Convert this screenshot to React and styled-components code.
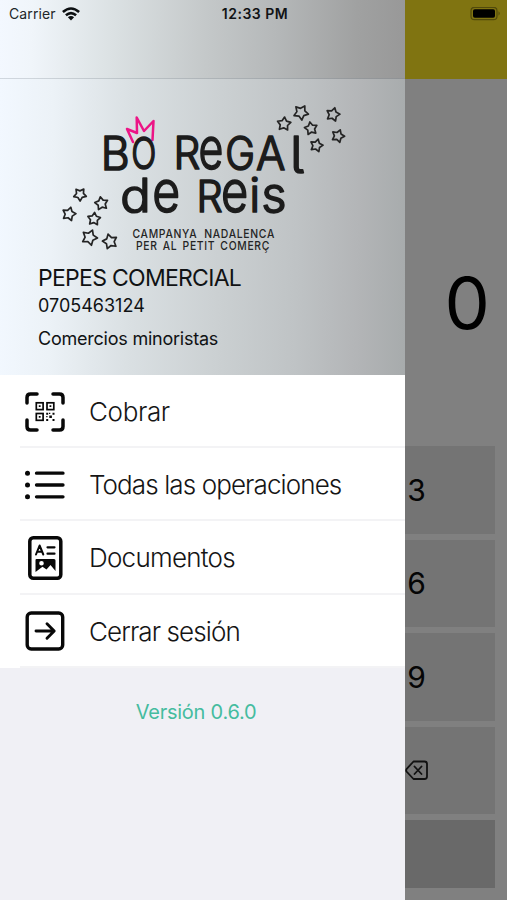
import React from "react";
import styled, { createGlobalStyle } from "styled-components";

const GlobalStyle = createGlobalStyle`
  * { box-sizing: border-box; }
  body { margin: 0; background: #808080; font-family: Inter, "Liberation Sans", sans-serif; }
`;

const Screen = styled.div`
  position: relative;
  width: 507px;
  height: 900px;
  overflow: hidden;
  background: #808080;
  color: #101214;
`;

const Register = styled.main`
  display: flex;
  flex-direction: column;
  height: 100%;
`;

const RegisterHeader = styled.header`
  height: 79px;
  flex: none;
  background: #807411;
`;

const Amount = styled.div`
  height: 367px;
  flex: none;
  display: flex;
  align-items: center;
  justify-content: flex-end;
  padding: 80px 17px 0 0;
  color: #000;
  font-family: Inter, sans-serif;
  font-size: 72px;
  line-height: 1;
`;

const Digit = styled.span`
  display: block;
`;

const Keypad = styled.div`
  display: grid;
  grid-template-columns: 156px;
  grid-auto-rows: 87.5px;
  justify-content: end;
  gap: 6px;
  padding-right: 12.5px;
`;

const Key = styled.div`
  display: flex;
  align-items: center;
  justify-content: center;
  background: ${(p) => (p.$wide ? "#696969" : "#747474")};
  height: ${(p) => (p.$wide ? "68px" : "auto")};
  color: #050505;
  font-size: 30px;
`;

const Drawer = styled.aside`
  position: absolute;
  top: 0;
  left: 0;
  width: 405px;
  height: 900px;
  display: flex;
  flex-direction: column;
  background: #f0f0f5;
`;

const DrawerBar = styled.div`
  height: 79px;
  flex: none;
  border-bottom: 1px solid rgba(120, 130, 140, 0.28);
  background: linear-gradient(91deg, #f3f8ff 0%, #f0f5fa 8%, #dce2e4 27%, #c4c8c9 51%, #b5b8b9 68%, #a0a1a1 88%, #989898 100%);
`;

const Profile = styled.section`
  height: 296px;
  flex: none;
  display: flex;
  flex-direction: column;
  padding: 21px 38px 0;
  background: linear-gradient(91deg, #f2f8ff 0%, #ecf2f7 13%, #dae0e3 32%, #cbd0d2 54%, #bfc3c5 73%, #b3b5b7 88%, #a7abac 100%);
`;

const Logo = styled.svg`
  display: block;
  width: 300px;
  height: 161px;
  flex: none;
  margin-left: 12px;
`;

const Line = styled.div`
  height: ${(p) => p.$h}px;
  line-height: ${(p) => p.$h}px;
  font-size: ${(p) => p.$size}px;
  letter-spacing: ${(p) => p.$track || 0}px;
  white-space: nowrap;
`;

const Menu = styled.nav`
  display: flex;
  flex-direction: column;
  height: 293px;
  flex: none;
  padding-left: 20px;
  background: #fff;
`;

const MenuItem = styled.div`
  height: 73.2px;
  display: flex;
  align-items: center;
  gap: 24px;
  padding: 2px 0 0 5px;
  border-bottom: 2px solid #f3f3f5;
`;

const Icon = styled.svg`
  display: block;
  width: 40px;
  height: 46px;
  flex: none;
  fill: none;
  stroke: #080808;
  stroke-linecap: round;
  stroke-linejoin: round;
`;

const Label = styled.span`
  font-size: 26px;
  font-weight: 300;
  letter-spacing: ${(p) => p.$track}px;
  white-space: nowrap;
  color: #151515;
`;

const Version = styled.div`
  margin-top: 31px;
  width: 392px;
  text-align: center;
  font-size: 20px;
  line-height: 26px;
  letter-spacing: -0.25px;
  color: #45bc9f;
`;

const StatusBar = styled.div`
  position: absolute;
  top: 0;
  left: 0;
  width: 507px;
  height: 27px;
  display: grid;
  grid-template-columns: 1fr auto 1fr;
  align-items: center;
  padding: 0 6px 0 9px;
`;

const Carrier = styled.div`
  display: flex;
  align-items: center;
  gap: 6px;
  font-size: 14px;
  letter-spacing: 0.1px;
  color: #22272a;
`;

const Clock = styled.div`
  font-size: 14px;
  font-weight: 600;
  letter-spacing: 0.5px;
  color: #111416;
`;

const StatusIcon = styled.svg`
  display: block;
  justify-self: end;
`;

const STARS = [
  [284, 124, 7, 5], [301, 112.5, 7.6, 30], [333, 114.5, 7, 15],
  [311, 128.5, 6.6, -10], [338, 136, 6.6, 20], [316.5, 145.5, 6.6, 15],
  [80, 194.5, 6.6, 35], [101.5, 203.5, 6.8, -10], [69, 214, 7, 15],
  [94, 219, 6.6, 5], [89.5, 237.5, 8, 22], [110, 241.5, 7.6, -15],
];

function starPoints(r) {
  return Array.from({ length: 10 }, (_, i) => {
    const a = (Math.PI * i) / 5 - Math.PI / 2;
    const d = i % 2 ? r * 0.55 : r;
    return `${(Math.cos(a) * d).toFixed(2)},${(Math.sin(a) * d).toFixed(2)}`;
  }).join(" ");
}

/* glyph, left edge, baseline, horizontal scale, font size */
const LETTERS = [
  ["B", 100.8, 170, 0.97, 46], ["O", 131.3, 168.5, 0.75, 44],
  ["R", 173.5, 168.8, 0.94, 45], ["e", 198.5, 168.8, 0.74, 58],
  ["G", 225.3, 169.8, 0.87, 46], ["A", 256, 169.5, 0.95, 46],
  ["l", 290, 172.5, 1.05, 51],
  ["d", 120.3, 211.8, 1.1, 46], ["e", 152.3, 211.8, 0.83, 58],
  ["R", 196.5, 211.8, 0.96, 43], ["e", 221, 211.8, 0.81, 58],
  ["i", 249.3, 211.8, 1, 47], ["s", 261.3, 211.8, 1, 49],
];

function CampaignLogo() {
  return (
    <Logo viewBox="50 100 300 161">
      <path d="M133 142L127 129L137 133L136.700 117.500L144 131L153.500 121L152.500 140" fill="none" stroke="#ec1586" strokeWidth="2.500" strokeLinejoin="round" strokeLinecap="round" />
      <g fill="#1c1c1c" stroke="#1c1c1c" strokeWidth="1.700" strokeLinejoin="round" fontFamily="Inter, sans-serif" fontWeight="300">
        {LETTERS.map(([ch, x, y, sx, size], i) => (
          <text key={i} transform={`translate(${x} ${y}) scale(${sx} 1)`} fontSize={size} style={{ fontFeatureSettings: '"cv05"' }}>{ch}</text>
        ))}
      </g>
      <g fill="#242424" fontFamily="Inter, sans-serif" fontSize="12" fontWeight="500">
        <text x="132.500" y="237.500" textLength="142.500" lengthAdjust="spacingAndGlyphs" wordSpacing="4" letterSpacing=".8">CAMPANYA NADALENCA</text>
        <text x="136" y="250.300" textLength="134" lengthAdjust="spacingAndGlyphs" wordSpacing="2" letterSpacing=".8">PER AL PETIT COMERÇ</text>
      </g>
      <g fill="none" stroke="#242424" strokeWidth="1.700" strokeLinejoin="round">
        {STARS.map(([x, y, r, a], i) => (
          <polygon key={i} points={starPoints(r)} transform={`translate(${x} ${y}) rotate(${a})`} />
        ))}
      </g>
    </Logo>
  );
}

function ScanIcon() {
  return (
    <Icon viewBox="0 0 40 46">
      <path d="M2 14V8.500Q2 5 5.500 5H12M28 5H34.500Q38 5 38 8.500V14M38 31V37.500Q38 41 34.500 41H28M12 41H5.500Q2 41 2 37.500V31" strokeWidth="3.500" />
      <g strokeWidth="1.700" strokeLinejoin="miter">
        <rect x="11.300" y="13.800" width="6.800" height="6.800" />
        <rect x="22" y="13.800" width="6.800" height="6.800" />
        <rect x="11.300" y="24.500" width="6.800" height="6.800" />
      </g>
      <path fill="#080808" stroke="none" d="M13.800 16.300h1.800v1.800h-1.800zM24.500 16.300h1.800v1.800h-1.800zM13.800 27h1.800v1.800h-1.800zM21.200 23.700h2v2h-2zM27.500 23.700h2v2h-2zM24.300 26.500h2.600v2.600h-2.600zM21.200 30h2v2h-2zM27.500 30h2v2h-2zM24 23.700h1.300v1.300h-1.300zM21.200 27h1.300v1.300h-1.300z" />
    </Icon>
  );
}

function ListIcon() {
  return (
    <Icon viewBox="0 0 40 46">
      <path d="M11.500 11.200H38M11.500 23H38M11.500 34.800H38" strokeWidth="3.300" />
      <g fill="#080808" stroke="none">
        <circle cx="2.500" cy="11.200" r="2.500" />
        <circle cx="2.500" cy="23" r="2.500" />
        <circle cx="2.500" cy="34.800" r="2.500" />
      </g>
    </Icon>
  );
}

function DocumentIcon() {
  return (
    <Icon viewBox="0 0 40 46">
      <rect x="4.800" y="2.800" width="31" height="40.500" rx="3.500" strokeWidth="3.500" />
      <path d="M11 19.500L14.600 10.500L18.300 19.500M12.300 16.700H17" strokeWidth="2" />
      <path d="M22.500 12.300H29.500M22.500 18.700H29.500" strokeWidth="2.200" />
      <path fill="#080808" stroke="none" fillRule="evenodd" d="M11.500 24H29Q30.500 24 30.500 25.500V36L25.500 30L21.500 34.500L17.500 31.700L10.500 37V25Q10.500 24 11.500 24ZM16.500 26A2.300 2.300 0 1 0 16.500 30.600A2.300 2.300 0 1 0 16.500 26Z" />
    </Icon>
  );
}

function ExitIcon() {
  return (
    <Icon viewBox="0 0 40 46">
      <rect x="2.200" y="5" width="35.500" height="36" rx="4" strokeWidth="3.400" />
      <path d="M11 23H28.500M22 15.800L29.200 23L22 30.200" strokeWidth="2.900" />
    </Icon>
  );
}

const ITEMS = [
  { label: "Cobrar", icon: ScanIcon, track: -0.35 },
  { label: "Todas las operaciones", icon: ListIcon, track: -0.9 },
  { label: "Documentos", icon: DocumentIcon, track: -0.75 },
  { label: "Cerrar sesión", icon: ExitIcon, track: -0.9 },
];

export default function App() {
  return (
    <Screen>
      <GlobalStyle />
      <Register>
        <RegisterHeader />
        <Amount><Digit>0</Digit></Amount>
        <Keypad>
          <Key>3</Key>
          <Key>6</Key>
          <Key>9</Key>
          <Key>
            <svg width="24" height="22" viewBox="0 0 24 22" fill="none" stroke="#111" strokeWidth="1.800" strokeLinecap="round" strokeLinejoin="round">
              <path d="M8.500 2.500H19.500Q22 2.500 22 5V17.500Q22 20 19.500 20H8.500L1.500 12.500Q.8 11.300 1.500 10.200ZM9.500 7.500L16.500 15M16.500 7.500L9.500 15" />
            </svg>
          </Key>
          <Key $wide />
        </Keypad>
      </Register>

      <Drawer>
        <DrawerBar />
        <Profile>
          <CampaignLogo />
          <Line $size={23} $h={34} $track={-0.72}>PEPES COMERCIAL</Line>
          <Line $size={18} $h={22}>0705463124</Line>
          <Line $size={18} $h={44} $track={-0.23}>Comercios minoristas</Line>
        </Profile>
        <Menu>
          {ITEMS.map(({ label, icon: Glyph, track }) => (
            <MenuItem key={label}>
              <Glyph />
              <Label $track={track}>{label}</Label>
            </MenuItem>
          ))}
        </Menu>
        <Version>Versión 0.6.0</Version>
      </Drawer>

      <StatusBar>
        <Carrier>
          Carrier
          <svg width="18" height="14" viewBox="0 0 18 14" fill="none" stroke="#0c0f11" strokeWidth="2.600">
            <path d="M.9 5Q9-2 17.100 5M3.900 8.300Q9 4 14.100 8.300" />
            <path d="M9 13.500L5.900 10.300Q9 7.800 12.100 10.300Z" fill="#0c0f11" stroke="none" />
          </svg>
        </Carrier>
        <Clock>12:33 PM</Clock>
        <StatusIcon width="32" height="14" viewBox="0 0 32 14">
          <rect x="2" y=".3" width="26" height="12.400" rx="3.500" fill="none" stroke="#514a0c" strokeWidth="1.200" />
          <rect x="4" y="2.300" width="22" height="8.500" rx="1.800" fill="#000" />
          <path d="M29.500 4.300Q32 6.500 29.500 8.700Z" fill="#514a0c" />
        </StatusIcon>
      </StatusBar>
    </Screen>
  );
}
